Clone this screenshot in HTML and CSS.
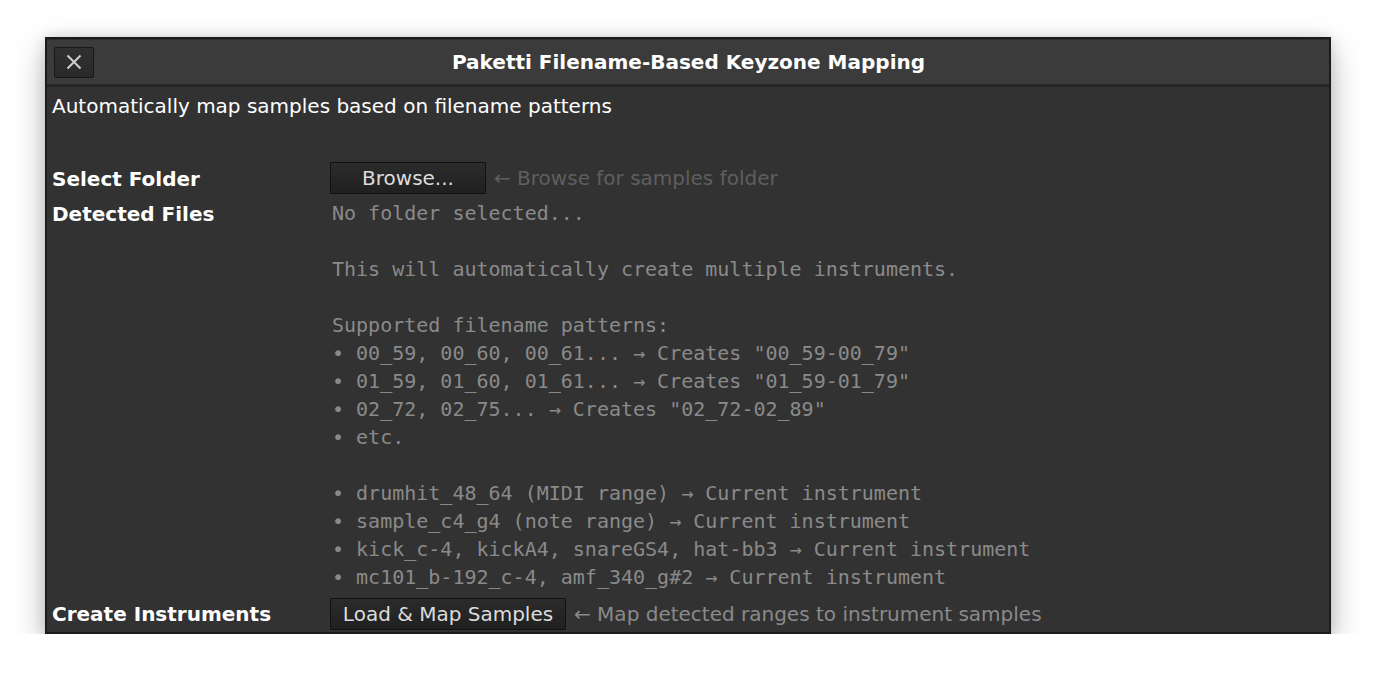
FILE: index.html
```html
<!DOCTYPE html>
<html>
<head>
<meta charset="utf-8">
<link rel="stylesheet" href="styles.css">
</head>
<body>
<div class="page">
  <div class="window">
    <div class="titlebar">
      <button class="close" aria-label="Close">
        <svg width="16" height="16" viewBox="0 0 16 16"><path d="M1.5 1.5 L14.5 14.5 M14.5 1.5 L1.5 14.5" stroke="#cfcfcf" stroke-width="2" fill="none"/></svg>
      </button>
      <div class="title">Paketti Filename-Based Keyzone Mapping</div>
      <div class="spacer"></div>
    </div>
    <div class="content">
      <div class="desc">Automatically map samples based on filename patterns</div>
      <div class="form">
        <div class="label row1">Select Folder</div>
        <div class="control row1"><button class="btn browse">Browse...</button><span class="hint">← Browse for samples folder</span></div>
        <div class="label row2">Detected Files</div>
        <pre class="mono">No folder selected...

This will automatically create multiple instruments.

Supported filename patterns:
• 00_59, 00_60, 00_61... → Creates "00_59-00_79"
• 01_59, 01_60, 01_61... → Creates "01_59-01_79"
• 02_72, 02_75... → Creates "02_72-02_89"
• etc.

• drumhit_48_64 (MIDI range) → Current instrument
• sample_c4_g4 (note range) → Current instrument
• kick_c-4, kickA4, snareGS4, hat-bb3 → Current instrument
• mc101_b-192_c-4, amf_340_g#2 → Current instrument</pre>
        <div class="label row3">Create Instruments</div>
        <div class="control row3"><button class="btn load">Load &amp; Map Samples</button><span class="hint hint2">← Map detected ranges to instrument samples</span></div>
      </div>
    </div>
  </div>
</div>
</body>
</html>
```
FILE: styles.css
```css
* { box-sizing: border-box; }
html, body { margin: 0; padding: 0; background: #ffffff; }
body { font-family: "DejaVu Sans", "Liberation Sans", sans-serif; }
.page { padding: 37px 0 0 45px; }
.window {
  width: 1286px;
  height: 597px;
  background: #323232;
  border: 2px solid #1c1c1c;
  box-shadow: 0 12px 30px rgba(0,0,0,0.28), 0 0 12px rgba(0,0,0,0.12);
  display: flex;
  flex-direction: column;
}
.titlebar {
  height: 48px;
  display: grid;
  grid-template-columns: 44px 1fr 44px;
  align-items: center;
  padding: 1px 6px 4px 7px;
  background: linear-gradient(#3b3b3b, #3b3b3b) top / 100% 44px no-repeat, #262626;
  border-top: 1px solid #2c2c2c;
}
.close {
  width: 40px;
  height: 31px;
  margin: 0;
  padding: 0;
  background: linear-gradient(#303030, #2a2a2a);
  border: 1px solid #171717;
  border-radius: 2px;
  display: flex;
  align-items: center;
  justify-content: center;
}
.close svg { display: block; }
.title {
  text-align: center;
  color: #ffffff;
  font-weight: bold;
  font-size: 20px;
}
.content {
  flex: 1;
  padding: 7px 5px 0 5px;
  color: #ffffff;
}
.desc {
  font-size: 20px;
  line-height: 24px;
  margin-bottom: 44px;
}
.form {
  display: grid;
  grid-template-columns: 278px 1fr;
  row-gap: 5px;
}
.label {
  font-weight: bold;
  font-size: 20px;
  line-height: 32px;
  white-space: nowrap;
}
.label.row1 { height: 32px; padding-top: 2px; line-height: 30px; }
.label.row2 { line-height: 30px; }
.label.row3 { margin-top: 2px; }
.control {
  display: flex;
  align-items: center;
  gap: 8px;
  height: 32px;
}
.control.row3 { margin-top: 2px; }
.btn {
  height: 32px;
  margin: 0;
  padding: 0 10px;
  font-family: "DejaVu Sans", sans-serif;
  font-size: 20px;
  color: #dcdcdc;
  background: linear-gradient(#2b2b2b, #202020);
  border: 1px solid #111111;
  border-radius: 1px;
}
.browse { width: 156px; }
.load { width: 236px; }
.hint {
  font-size: 20px;
  color: #5f5f5f;
  white-space: nowrap;
}
.hint2 { color: #8a8a8a; }
.mono {
  margin: 0;
  padding-left: 2px;
  font-family: "DejaVu Sans Mono", "Liberation Mono", monospace;
  font-size: 20px;
  line-height: 28px;
  color: #8a8a8a;
  white-space: pre;
}
```
